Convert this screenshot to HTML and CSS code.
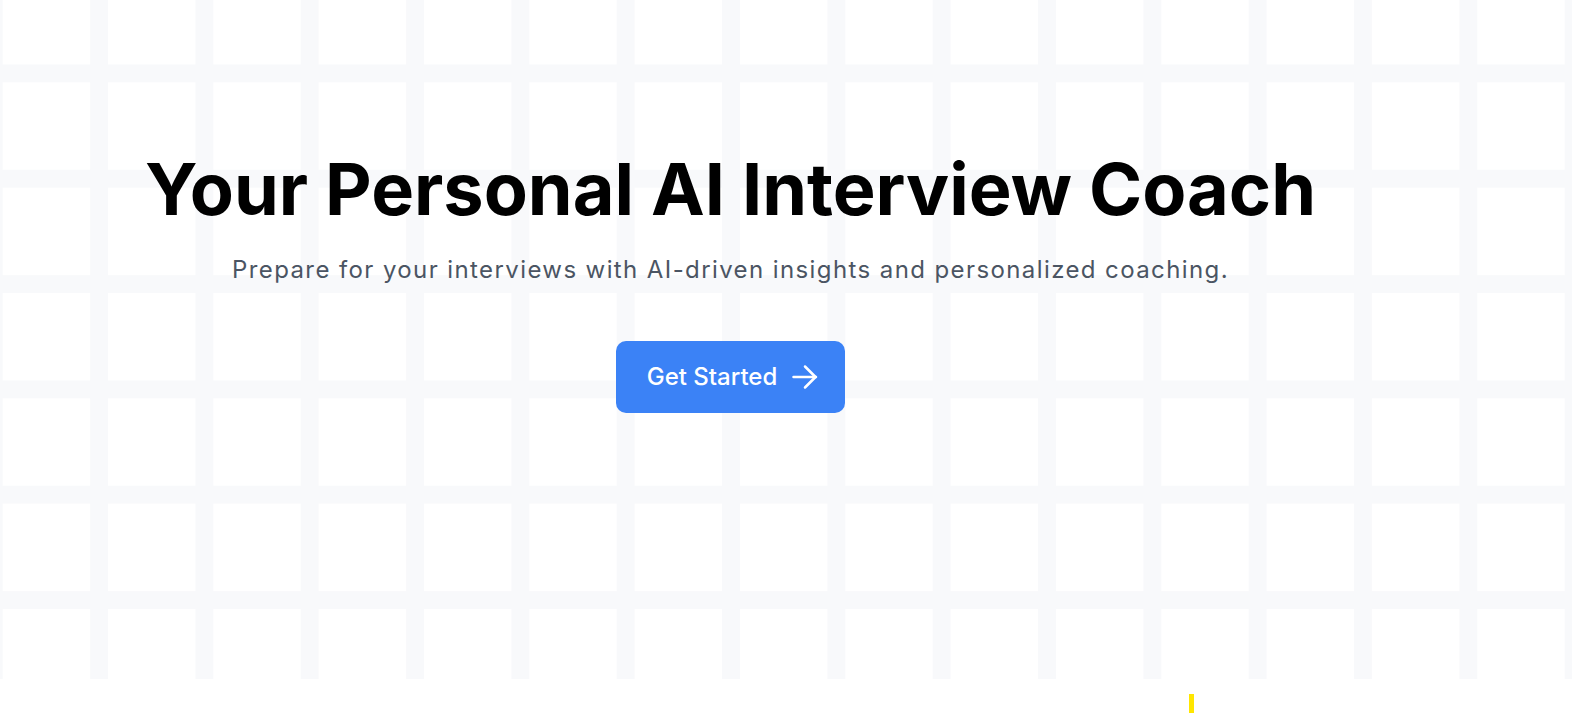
FILE: index.html
```html
<!DOCTYPE html>
<html lang="en">
<head>
<meta charset="utf-8">
<title>AI Interview Coach</title>
<link rel="stylesheet" href="styles.css">
</head>
<body>
<div class="page">
  <div class="grid-bg"></div>
  <main class="hero">
    <h1 class="hero-title">Your Personal AI Interview Coach</h1>
    <p class="hero-sub">Prepare for your interviews with AI-driven insights and personalized coaching.</p>
    <a class="cta" href="#">
      <span>Get Started</span>
      <svg class="cta-icon" width="26" height="26" viewBox="0 0 26 26" fill="none" stroke="currentColor" stroke-width="2.5" stroke-linecap="round" stroke-linejoin="round"><path d="M1.5 13H24"/><path d="M13 2.5 23.5 13 13 23.5"/></svg>
    </a>
  </main>
  <div class="marker"></div>
</div>
</body>
</html>
```

FILE: styles.css
```css
* { box-sizing: border-box; }
html, body { margin: 0; padding: 0; background: #ffffff; }
body { font-family: Inter, "Noto Sans", sans-serif; }

.page {
  position: relative;
  width: 1572px;
  height: 713px;
  overflow: hidden;
}

.grid-bg {
  position: absolute;
  top: 0;
  left: 0;
  right: 0;
  height: 679px;
  background-color: #ffffff;
  background-image:
    linear-gradient(to right, transparent 87.33px, #f8f9fb 87.33px),
    linear-gradient(to bottom, transparent 87.33px, #f8f9fb 87.33px);
  background-size: 105.33px 105.33px;
  background-position: 2.67px -23px, 0 -23px;
}

.hero {
  position: relative;
  display: flex;
  flex-direction: column;
  align-items: center;
  padding: 153px 111px 0 0;
}

.hero-title {
  margin: 0;
  font-size: 72px;
  line-height: 72px;
  font-weight: 700;
  color: #000000;
  letter-spacing: 0;
}

.hero-sub {
  margin: 29px 0 0;
  font-size: 24px;
  line-height: 32px;
  color: #4b5563;
  letter-spacing: 1.4px;
}

.cta {
  margin-top: 55px;
  display: flex;
  align-items: center;
  gap: 15px;
  height: 72px;
  padding: 0 27px 0 31px;
  background: #3b82f6;
  color: #ffffff;
  border-radius: 10px;
  font-size: 24px;
  line-height: 32px;
  font-weight: 500;
  text-decoration: none;
}

.cta-icon { display: block; }

.marker {
  position: absolute;
  left: 1189px;
  top: 694px;
  width: 5px;
  height: 19px;
  background: #ffe600;
}
```
